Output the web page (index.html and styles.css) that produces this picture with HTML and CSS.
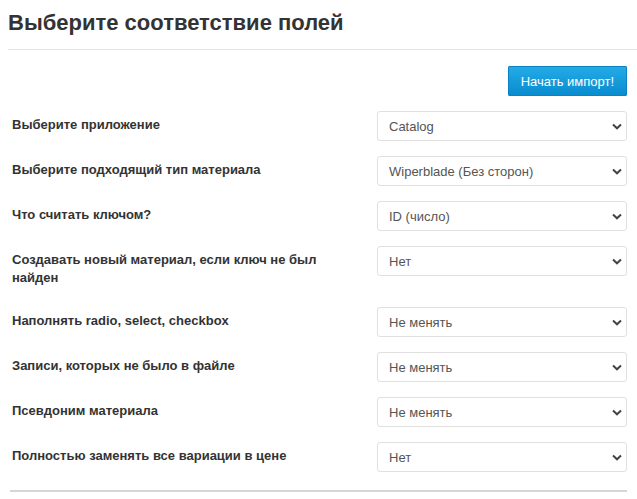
FILE: index.html
```html
<!DOCTYPE html>
<html lang="ru">
<head>
<meta charset="UTF-8">
<meta name="viewport" content="width=device-width, initial-scale=1.0">
<title>Выберите соответствие полей</title>
<link rel="stylesheet" href="styles.css">
</head>
<body>

<div class="page-header">
    <h1>Выберите соответствие полей</h1>
</div>

<form class="import-form">
    <div class="actions">
        <button type="button" class="btn-import">Начать импорт!</button>
    </div>

    <div class="form-row">
        <label class="control-label">Выберите приложение</label>
        <div class="select-wrap">
            <select><option>Catalog</option></select>
            <svg class="chevron" width="10" height="7" viewBox="0 0 10 7"><path d="M1 1.5 L5 5.3 L9 1.5" fill="none" stroke="#444" stroke-width="2"/></svg>
        </div>
    </div>

    <div class="form-row">
        <label class="control-label">Выберите подходящий тип материала</label>
        <div class="select-wrap">
            <select><option>Wiperblade (Без сторон)</option></select>
            <svg class="chevron" width="10" height="7" viewBox="0 0 10 7"><path d="M1 1.5 L5 5.3 L9 1.5" fill="none" stroke="#444" stroke-width="2"/></svg>
        </div>
    </div>

    <div class="form-row">
        <label class="control-label">Что считать ключом?</label>
        <div class="select-wrap">
            <select><option>ID (число)</option></select>
            <svg class="chevron" width="10" height="7" viewBox="0 0 10 7"><path d="M1 1.5 L5 5.3 L9 1.5" fill="none" stroke="#444" stroke-width="2"/></svg>
        </div>
    </div>

    <div class="form-row">
        <label class="control-label">Создавать новый материал, если ключ не был найден</label>
        <div class="select-wrap">
            <select><option>Нет</option></select>
            <svg class="chevron" width="10" height="7" viewBox="0 0 10 7"><path d="M1 1.5 L5 5.3 L9 1.5" fill="none" stroke="#444" stroke-width="2"/></svg>
        </div>
    </div>

    <div class="form-row">
        <label class="control-label">Наполнять radio, select, checkbox</label>
        <div class="select-wrap">
            <select><option>Не менять</option></select>
            <svg class="chevron" width="10" height="7" viewBox="0 0 10 7"><path d="M1 1.5 L5 5.3 L9 1.5" fill="none" stroke="#444" stroke-width="2"/></svg>
        </div>
    </div>

    <div class="form-row">
        <label class="control-label">Записи, которых не было в файле</label>
        <div class="select-wrap">
            <select><option>Не менять</option></select>
            <svg class="chevron" width="10" height="7" viewBox="0 0 10 7"><path d="M1 1.5 L5 5.3 L9 1.5" fill="none" stroke="#444" stroke-width="2"/></svg>
        </div>
    </div>

    <div class="form-row">
        <label class="control-label">Псевдоним материала</label>
        <div class="select-wrap">
            <select><option>Не менять</option></select>
            <svg class="chevron" width="10" height="7" viewBox="0 0 10 7"><path d="M1 1.5 L5 5.3 L9 1.5" fill="none" stroke="#444" stroke-width="2"/></svg>
        </div>
    </div>

    <div class="form-row">
        <label class="control-label">Полностью заменять все вариации в цене</label>
        <div class="select-wrap">
            <select><option>Нет</option></select>
            <svg class="chevron" width="10" height="7" viewBox="0 0 10 7"><path d="M1 1.5 L5 5.3 L9 1.5" fill="none" stroke="#444" stroke-width="2"/></svg>
        </div>
    </div>

    <hr class="form-end">
</form>

</body>
</html>
```

FILE: styles.css
```css
* {
    box-sizing: border-box;
    margin: 0;
    padding: 0;
}

body {
    font-family: "Liberation Sans", Arial, sans-serif;
    font-size: 13px;
    color: #333;
    background: #fff;
}

.page-header {
    margin-left: 8px;
    padding: 10px 0 13px;
    border-bottom: 1px solid #e3e3e3;
}

.page-header h1 {
    font-size: 22px;
    font-weight: bold;
    line-height: 26px;
    color: #333;
}

.import-form {
    margin: 0 10px;
}

.actions {
    display: flex;
    justify-content: flex-end;
    padding-top: 16px;
    margin-bottom: 15px;
}

.btn-import {
    font-family: inherit;
    font-size: 13px;
    color: #fff;
    height: 30px;
    padding: 0 12px;
    border: 1px solid #0b82c2;
    border-radius: 1px;
    background: linear-gradient(#23abe6, #0a8ccf);
    cursor: pointer;
}

.form-row {
    display: grid;
    grid-template-columns: 1fr 250px;
    column-gap: 15px;
    margin-bottom: 15px;
}

.control-label {
    font-weight: bold;
    line-height: 18px;
    padding: 5px 0 5px 2px;
}

.select-wrap {
    position: relative;
    height: 30px;
}

.select-wrap select {
    appearance: none;
    -webkit-appearance: none;
    width: 100%;
    height: 30px;
    padding: 0 30px 0 11px;
    font-family: inherit;
    font-size: 13px;
    color: #555;
    background: #fff;
    border: 1px solid #e0e0e0;
    border-radius: 3px;
}

.chevron {
    position: absolute;
    right: 5px;
    top: 12px;
    pointer-events: none;
}

.form-end {
    border: 0;
    border-top: 2px solid #d6d6d6;
    margin-top: 18px;
}
```
